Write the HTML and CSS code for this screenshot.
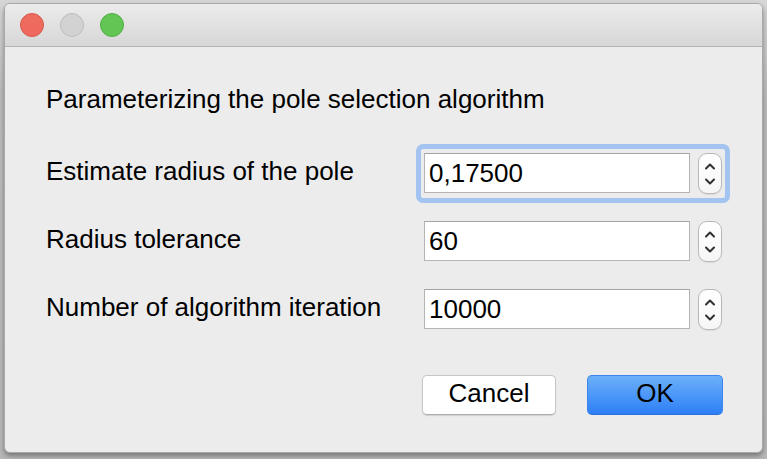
FILE: index.html
```html
<!DOCTYPE html>
<html>
<head>
<meta charset="utf-8">
<link rel="stylesheet" href="styles.css">
</head>
<body>
<div class="window">
  <div class="titlebar">
    <span class="light red"></span>
    <span class="light gray"></span>
    <span class="light green"></span>
  </div>
  <div class="content">
    <div class="heading">Parameterizing the pole selection algorithm</div>
    <div class="form">
      <div class="label">Estimate radius of the pole</div>
      <div class="field focused">
        <div class="input">0,17500</div>
        <div class="stepper">
          <svg width="12" height="30" viewBox="0 0 12 30"><path d="M2 9.5 L6 5.5 L10 9.5" /><path d="M2 20.5 L6 24.5 L10 20.5" /></svg>
        </div>
      </div>
      <div class="label">Radius tolerance</div>
      <div class="field">
        <div class="input">60</div>
        <div class="stepper">
          <svg width="12" height="30" viewBox="0 0 12 30"><path d="M2 9.5 L6 5.5 L10 9.5" /><path d="M2 20.5 L6 24.5 L10 20.5" /></svg>
        </div>
      </div>
      <div class="label">Number of algorithm iteration</div>
      <div class="field">
        <div class="input">10000</div>
        <div class="stepper">
          <svg width="12" height="30" viewBox="0 0 12 30"><path d="M2 9.5 L6 5.5 L10 9.5" /><path d="M2 20.5 L6 24.5 L10 20.5" /></svg>
        </div>
      </div>
    </div>
    <div class="buttons">
      <button class="btn cancel">Cancel</button>
      <button class="btn ok">OK</button>
    </div>
  </div>
</div>
</body>
</html>
```
FILE: styles.css
```css
* { box-sizing: border-box; }
html, body { margin: 0; padding: 0; }
body {
  width: 767px;
  height: 459px;
  background: linear-gradient(#d6d6d6, #bdbdbd 20%, #b8b8b8);
  font-family: "Liberation Sans", Arial, sans-serif;
  overflow: hidden;
  padding: 3px 4px 0 4px;
}
.window {
  width: 759px;
  height: 450px;
  background: #ececec;
  border-radius: 6px;
  border: 1px solid #a9a9a9;
  box-shadow: 0 3px 5px rgba(0,0,0,0.35);
  overflow: hidden;
}
.titlebar {
  height: 43px;
  background: linear-gradient(#ececec, #d7d7d7);
  border-bottom: 1px solid #b3b3b3;
  display: flex;
  align-items: center;
  padding-left: 15px;
  gap: 16px;
}
.light {
  width: 24px;
  height: 24px;
  border-radius: 50%;
  display: block;
}
.red { background: #ee6a5f; border: 1px solid #d8574c; }
.gray { background: #d2d2d2; border: 1px solid #bdbdbd; }
.green { background: #62c655; border: 1px solid #53ae44; }
.content {
  padding: 37px 39px 0 41px;
}
.heading {
  font-size: 26px;
  line-height: 30px;
  color: #000;
}
.form {
  margin-top: 39px;
  display: grid;
  grid-template-columns: 378px auto;
  row-gap: 27px;
  align-items: center;
}
.label {
  font-size: 26px;
  line-height: 30px;
  color: #000;
  margin-top: -5px;
}
.field {
  display: flex;
  align-items: flex-start;
  gap: 8px;
  position: relative;
  width: 298px;
}
.field.focused::before {
  content: "";
  position: absolute;
  left: -8px;
  right: -8px;
  top: -9px;
  bottom: -9px;
  border: 5px solid #a3c4f0;
  border-radius: 7px;
  pointer-events: none;
}
.input {
  width: 266px;
  height: 40px;
  background: #fff;
  border: 1px solid #b4b4b4;
  border-top-color: #a5a5a5;
  font-size: 26px;
  line-height: 38px;
  padding-left: 4px;
  color: #000;
}
.stepper {
  width: 24px;
  height: 41px;
  border: 1px solid #b9b9b9;
  border-radius: 9px;
  background: linear-gradient(#ffffff, #f6f6f6);
  display: flex;
  align-items: center;
  justify-content: center;
  box-shadow: 0 1px 1px rgba(0,0,0,0.08);
}
.stepper svg path {
  fill: none;
  stroke: #303030;
  stroke-width: 2;
  stroke-linecap: round;
  stroke-linejoin: round;
}
.buttons {
  margin-top: 45px;
  display: flex;
  justify-content: flex-end;
  gap: 31px;
}
.btn {
  font-family: "Liberation Sans", Arial, sans-serif;
  font-size: 26px;
  height: 40px;
  border-radius: 5px;
  color: #000;
  padding: 0 0 3px 0;
  margin: 0;
  display: flex;
  align-items: center;
  justify-content: center;
}
.cancel {
  width: 134px;
  background: #fff;
  border: 1px solid #c6c6c6;
  border-bottom-color: #adadad;
  box-shadow: 0 1px 1px rgba(0,0,0,0.12);
}
.ok {
  width: 136px;
  background: linear-gradient(#6cb0fa, #2d7ff6);
  border: 1px solid #3a86f0;
  border-bottom-color: #2a6fdc;
}
```
